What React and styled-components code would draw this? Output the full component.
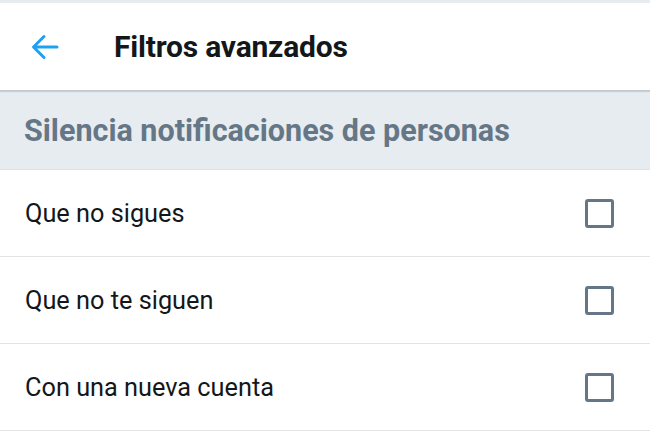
import React from "react";
import styled, { createGlobalStyle } from "styled-components";

const GlobalStyle = createGlobalStyle`
  html, body {
    margin: 0;
    padding: 0;
    background: #ffffff;
  }
  body {
    font-family: Roboto, "Noto Sans", "Liberation Sans", sans-serif;
  }
`;

const Screen = styled.div`
  width: 650px;
  height: 439px;
  overflow: hidden;
  background: #ffffff;
  border-top: 3px solid #e6ecf0;
  box-sizing: border-box;
`;

const Toolbar = styled.header`
  height: 87px;
  display: flex;
  align-items: center;
  padding-left: 31px;
  gap: 55px;
  background: #ffffff;
  border-bottom: 1px solid #c4c8cb;
  box-shadow: 0 1px 1px rgba(0, 0, 0, 0.12);
  position: relative;
`;

const Title = styled.h1`
  margin: 0;
  font-size: 30px;
  font-weight: 700;
  color: #14171a;
  letter-spacing: -0.2px;
`;

const SectionHeader = styled.div`
  height: 78px;
  display: flex;
  align-items: center;
  padding-left: 24px;
  background: #e6ecf0;
  border-bottom: 1px solid #dde2e6;
  font-size: 30.5px;
  font-weight: 700;
  color: #657786;
`;

const Row = styled.label`
  height: 86px;
  display: flex;
  align-items: center;
  justify-content: space-between;
  padding: 0 36px 0 25px;
  border-bottom: 1px solid #e1e4e6;
  font-size: 25.3px;
  color: #14171a;
`;

const Box = styled.span`
  width: 23px;
  height: 23px;
  border: 3px solid #657786;
  border-radius: 3px;
  display: block;
`;

const BackArrow = () => (
  <svg width="28" height="26" viewBox="0 0 28 26" fill="none">
    <path
      d="M26 13H3M13 2.5L2.5 13L13 23.5"
      stroke="#1da1f2"
      strokeWidth="3"
      strokeLinecap="round"
      strokeLinejoin="round"
    />
  </svg>
);

const options = ["Que no sigues", "Que no te siguen", "Con una nueva cuenta"];

export default function App() {
  return (
    <>
      <GlobalStyle />
      <Screen>
        <Toolbar>
          <BackArrow />
          <Title>Filtros avanzados</Title>
        </Toolbar>
        <SectionHeader>Silencia notificaciones de personas</SectionHeader>
        {options.map((o) => (
          <Row key={o}>
            {o}
            <Box />
          </Row>
        ))}
      </Screen>
    </>
  );
}
